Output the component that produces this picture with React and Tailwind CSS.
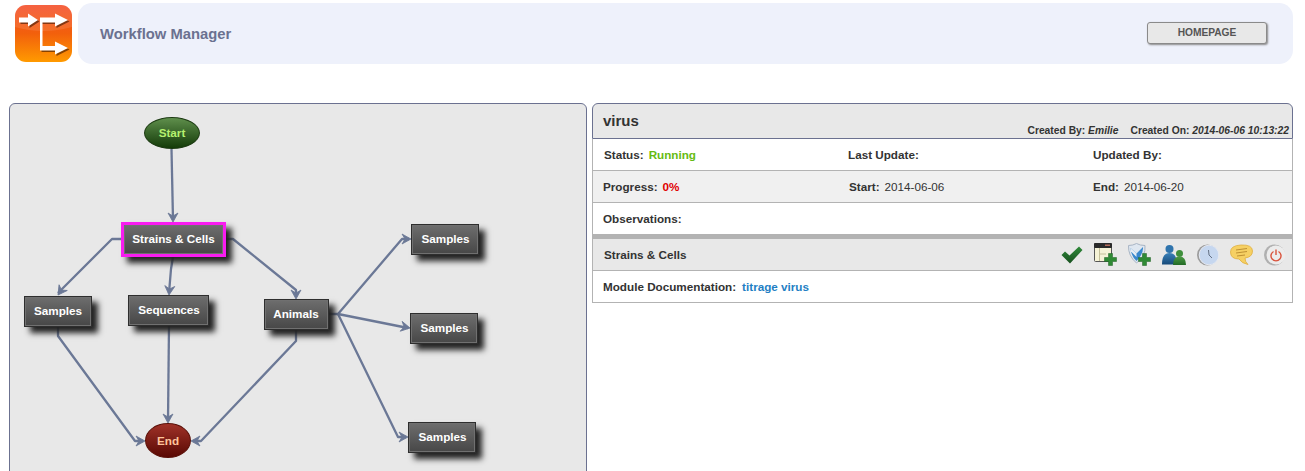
const SANS = "font-['Liberation_Sans',Arial,sans-serif]";

const boxes = [
  { label: "Strains & Cells", cls: "left-[111px] top-[118px] w-[105px] h-[35px] border-[3px] border-[#f81cf0] shadow-[inset_0_0_0_1px_#2e2e2e,6px_6px_6px_#222]" },
  { label: "Samples", cls: "left-[14px] top-[192px] w-[68px] h-[31px]" },
  { label: "Sequences", cls: "left-[118px] top-[191px] w-[81px] h-[31px] pl-[1px]" },
  { label: "Animals", cls: "left-[254px] top-[195px] w-[65px] h-[31px] pr-[1px]" },
  { label: "Samples", cls: "left-[401px] top-[120px] w-[68px] h-[31px] pl-[1px]" },
  { label: "Samples", cls: "left-[400px] top-[209px] w-[68px] h-[31px] pl-[1px]" },
  { label: "Samples", cls: "left-[398px] top-[318px] w-[68px] h-[31px] pl-[1px]" },
];

// page coordinates minus the panel's inner origin (10, 104)
const edges = [
  "M161.5 45 L163 116",
  "M111 135 L102 135 L48 189",
  "M163 153 L161 165 L159 189",
  "M215 135 L223 135 L286 186 L286 193",
  "M48 222 L48 232 L125 337 L133 337",
  "M159 221 L158 317",
  "M286 226 L286 237 L191 337 L183 337",
  "M319 210 L328 210 L392 135 L399 135",
  "M328 210 L398 224",
  "M328 210 L388 333 L396 333",
];

const arrows = [
  [163, 118, 90], [48, 191, 125], [159, 191, 95], [286, 195, 90],
  [135, 337, 0], [158, 319, 90], [181, 337, 180],
  [401, 135, 0], [400, 224, 11], [398, 333, 0],
];

function Diagram() {
  return (
    <div className="relative h-full w-full">
      <svg className="absolute left-0 top-0" width="576" height="367" fill="none">
        {edges.map((d, i) => (
          <path key={i} d={d} stroke="#6b7896" strokeWidth="2.300" strokeLinejoin="round" />
        ))}
        {arrows.map(([x, y, a], i) => (
          <path
            key={i}
            transform={`translate(${x} ${y}) rotate(${a})`}
            d="M-9 -5 L0 0 L-9 5 L-6 0 Z"
            fill="#6b7896"
            stroke="#6b7896"
            strokeWidth="0.8"
          />
        ))}
      </svg>

      <div className="absolute left-[134px] top-[13px] flex h-[32px] w-[56px] items-center justify-center rounded-[50%] border border-[#1c3a12] bg-gradient-to-b from-[#5f8f4c] to-[#143c08] font-bold text-[#b4f06e]">
        Start
      </div>

      {boxes.map((b, i) => (
        <div
          key={i}
          className={`absolute flex items-center justify-center border border-[#2e2e2e] bg-gradient-to-b from-[#6e6e6e] to-[#474747] pb-[1px] font-bold text-white shadow-[inset_0_0_0_1px_#707070,6px_6px_6px_#222] ${b.cls}`}
        >
          {b.label}
        </div>
      ))}

      <div className="absolute left-[135px] top-[319px] flex h-[35px] w-[46px] items-center justify-center rounded-[50%] border border-[#5a1008] bg-gradient-to-b from-[#a03228] to-[#5a0804] font-bold text-[#ffc49a]">
        End
      </div>
    </div>
  );
}

function Logo() {
  return (
    <svg width="57" height="57" viewBox="0 0 57 57" className="shrink-0">
      <defs>
        <linearGradient id="logoBg" x1="0" y1="0" x2="0" y2="1">
          <stop offset="0" stopColor="#f4502c" />
          <stop offset="0.5" stopColor="#f2600c" />
          <stop offset="1" stopColor="#ff9a00" />
        </linearGradient>
      </defs>
      <rect x="0" y="0" width="57" height="57" rx="11" fill="url(#logoBg)" />
      <path d="M0 11 A11 11 0 0 1 11 0 H46 A11 11 0 0 1 57 11 V22 Q28 30 0 22 Z" fill="#fff" opacity="0.1" />
      <g fill="#3a1600" opacity="0.6" transform="translate(1.500 1.500)">
        <path d="M4 12.500 H13 V8.500 L23 15 L13 21.500 V17.500 H4 Z" />
        <path d="M25 12.500 H40 V8.500 L53 15 L40 21.500 V17.500 H25 Z" />
        <path d="M25 40.500 H40 V36.500 L53 43 L40 49.500 V45.500 H25 Z" />
      </g>
      <g fill="#fff">
        <path d="M4 12.500 H13 V8.500 L23 15 L13 21.500 V17.500 H4 Z" />
        <path d="M25 12.500 H40 V8.500 L53 15 L40 21.500 V17.500 H25 Z" />
        <path d="M25 15 H27.500 V41 H40 V36.500 L53 43 L40 49.500 V45.500 H25 Z" />
      </g>
    </svg>
  );
}

function IconCheck() {
  return (
    <svg width="22" height="18" viewBox="0 0 22 18" className="shrink-0">
      <defs>
        <linearGradient id="checkG" x1="0" y1="0" x2="0" y2="1">
          <stop offset="0" stopColor="#2f8a3a" />
          <stop offset="1" stopColor="#17501f" />
        </linearGradient>
      </defs>
      <path d="M0.500 9 L4 5.500 L8.500 9.500 L18 0.500 L21.500 4 L9 17.500 Z" fill="url(#checkG)" />
    </svg>
  );
}

function Plus() {
  return <path d="M4 0 H8 V4 H12 V8 H8 V12 H4 V8 H0 V4 H4 Z" fill="#2f8a34" stroke="#1c5e22" strokeWidth="0.5" />;
}

function IconWindow() {
  return (
    <svg width="23" height="23" viewBox="0 0 23 23" className="shrink-0">
      <rect x="0.500" y="0.500" width="17" height="18" rx="1" fill="#f5f2d6" stroke="#555" />
      <rect x="0" y="0" width="18" height="5" rx="1" fill="#2a2a2a" />
      <rect x="11" y="1.500" width="5" height="1.500" fill="#b06a5a" />
      <path d="M5.500 5 V18 M5.500 11 H12" stroke="#c4c09a" />
      <g transform="translate(10.500 10.500)"><Plus /></g>
    </svg>
  );
}

function IconShield() {
  return (
    <svg width="23" height="23" viewBox="0 0 23 23" className="shrink-0">
      <path d="M0.500 2.500 Q5 2.500 8.500 0.500 Q12 2.500 17 2.500 Q18 13 8.500 20 Q0 13 0.500 2.500 Z" fill="#dfe7f0" stroke="#a8b4c4" />
      <path d="M2.500 5 L8.500 10.500 L15 4 Q15.500 11 8.500 18 Q3 13 2.500 5 Z" fill="#3a88cc" />
      <path d="M2.500 5 L8.500 10.500 L8.500 14 L3 8.500 Z" fill="#e8eef5" />
      <g transform="translate(10.500 10.500)"><Plus /></g>
    </svg>
  );
}

function IconUsers() {
  return (
    <svg width="24" height="20" viewBox="0 0 24 20" className="shrink-0">
      <defs>
        <linearGradient id="blueG" x1="0" y1="0" x2="0" y2="1">
          <stop offset="0" stopColor="#3a80b8" />
          <stop offset="1" stopColor="#164a7a" />
        </linearGradient>
        <linearGradient id="greenG" x1="0" y1="0" x2="0" y2="1">
          <stop offset="0" stopColor="#4c9a44" />
          <stop offset="1" stopColor="#226a26" />
        </linearGradient>
      </defs>
      <circle cx="7.500" cy="4" r="4" fill="#2f74ad" />
      <path d="M0 19.500 Q0 8 7.500 8 Q15 8 15 19.500 Z" fill="url(#blueG)" />
      <circle cx="17.500" cy="8.500" r="3.500" fill="#3f8f3c" />
      <path d="M11 20 Q11 11.500 17.500 11.500 Q24 11.500 24 20 Z" fill="url(#greenG)" />
    </svg>
  );
}

function IconClock() {
  return (
    <svg width="22" height="22" viewBox="0 0 22 22" className="shrink-0">
      <circle cx="10.500" cy="11" r="10.500" fill="#9c9c9c" />
      <circle cx="12" cy="11" r="9.800" fill="#c6d7ef" stroke="#e4e8f0" />
      <path d="M12 11 L11.500 6 M12 11 L15 14" stroke="#4a5568" strokeWidth="0.8" fill="none" />
    </svg>
  );
}

function IconBubble() {
  return (
    <svg width="23" height="21" viewBox="0 0 23 21" className="shrink-0">
      <path d="M0.500 8 Q0.500 1.500 11 1 Q22.500 0.500 22.500 7 Q22.500 13 15 14 Q15 18 18 20.500 Q12 19.500 9 15 Q0.500 15 0.500 8 Z" fill="#f6d063" stroke="#e0ae3e" strokeWidth="0.8" />
      <path d="M6 6 L17 4.500 M6 9 L17 7.500 M7 12 L15 11" stroke="#b8892c" strokeWidth="0.9" fill="none" />
    </svg>
  );
}

function IconPower() {
  return (
    <svg width="22" height="22" viewBox="0 0 22 22" className="shrink-0">
      <circle cx="10.500" cy="11" r="10.500" fill="#b0b0b0" />
      <circle cx="12" cy="11" r="9.500" fill="#ececec" />
      <path d="M9.500 7.500 A5 5 0 1 0 14.500 7.500" stroke="#d9533c" strokeWidth="1.400" fill="none" />
      <path d="M12 5.500 V11" stroke="#d9533c" strokeWidth="1.400" />
    </svg>
  );
}

function Field({ label, children }) {
  return (
    <div className="flex items-center gap-[5px]">
      <span className="font-bold">{label}</span>
      {children}
    </div>
  );
}

export default function App() {
  return (
    <div className={`h-screen overflow-hidden bg-white ${SANS} text-[11.700px] text-[#333]`}>
      <div className="flex items-center gap-[6px] pl-[15px] pr-3 pt-[3px]">
        <Logo />
        <div className="flex h-[61px] flex-1 items-center justify-between rounded-[14px] bg-[#eef1fb] pl-[22px] pr-[26px]">
          <span className="mt-[2px] text-[14.800px] font-bold text-[#6b7190]">Workflow Manager</span>
          <button className="mb-[1px] h-[22px] w-[120px] rounded-[3px] border border-[#8a8a8a] bg-[#e8e8e8] text-[10.200px] font-bold text-[#555] shadow-[1px_1px_2px_#888]">
            HOMEPAGE
          </button>
        </div>
      </div>

      <div className="mt-[39px] flex gap-[5px] pl-[9px] pr-3">
        <div className="h-[400px] w-[578px] shrink-0 rounded-t-[6px] border border-[#6b7190] bg-[#e8e8e8]">
          <Diagram />
        </div>

        <div className="flex-1">
          <div className="flex h-[36px] items-start justify-between rounded-t-[6px] border border-[#6b7190] bg-[#e8e8e8] pl-[10px] pr-[3px]">
            <span className="mt-[8px] text-[15px] font-bold leading-[18px]">virus</span>
            <span className="mt-[21px] text-[10.300px] font-bold leading-[11px]">
              Created By: <em>Emilie</em>
              <span className="ml-3">Created On: <em>2014-06-06 10:13:22</em></span>
            </span>
          </div>

          <div className="border-x border-b border-[#b3b3b3]">
            <div className="grid h-[32px] grid-cols-[244px_245px_1fr] items-center border-b border-[#b3b3b3] pl-[11px]">
              <Field label="Status:"><span className="font-bold text-[#66bb11]">Running</span></Field>
              <Field label="Last Update:" />
              <Field label="Updated By:" />
            </div>
            <div className="grid h-[32px] grid-cols-[246px_244px_1fr] items-center border-b border-[#b3b3b3] bg-[#f0f0f0] pl-[10px]">
              <Field label="Progress:"><span className="font-bold text-[#e00000]">0%</span></Field>
              <Field label="Start:"><span>2014-06-06</span></Field>
              <Field label="End:"><span>2014-06-20</span></Field>
            </div>
            <div className="flex h-[31px] items-center pl-[10px]">
              <span className="font-bold">Observations:</span>
            </div>
            <div className="flex h-[37px] items-center justify-between border-t-[5px] border-b border-t-[#b3b3b3] border-b-[#b3b3b3] bg-[#e8e8e8] pl-[11px] pr-[6px]">
              <span className="font-bold">Strains & Cells</span>
              <div className="flex items-center gap-[11px]">
                <IconCheck />
                <IconWindow />
                <IconShield />
                <IconUsers />
                <IconClock />
                <IconBubble />
                <IconPower />
              </div>
            </div>
            <div className="flex h-[31px] items-center gap-[6px] pl-[10px]">
              <span className="font-bold">Module Documentation:</span>
              <span className="font-bold text-[#1f7fc4]">titrage virus</span>
            </div>
          </div>
        </div>
      </div>
    </div>
  );
}
